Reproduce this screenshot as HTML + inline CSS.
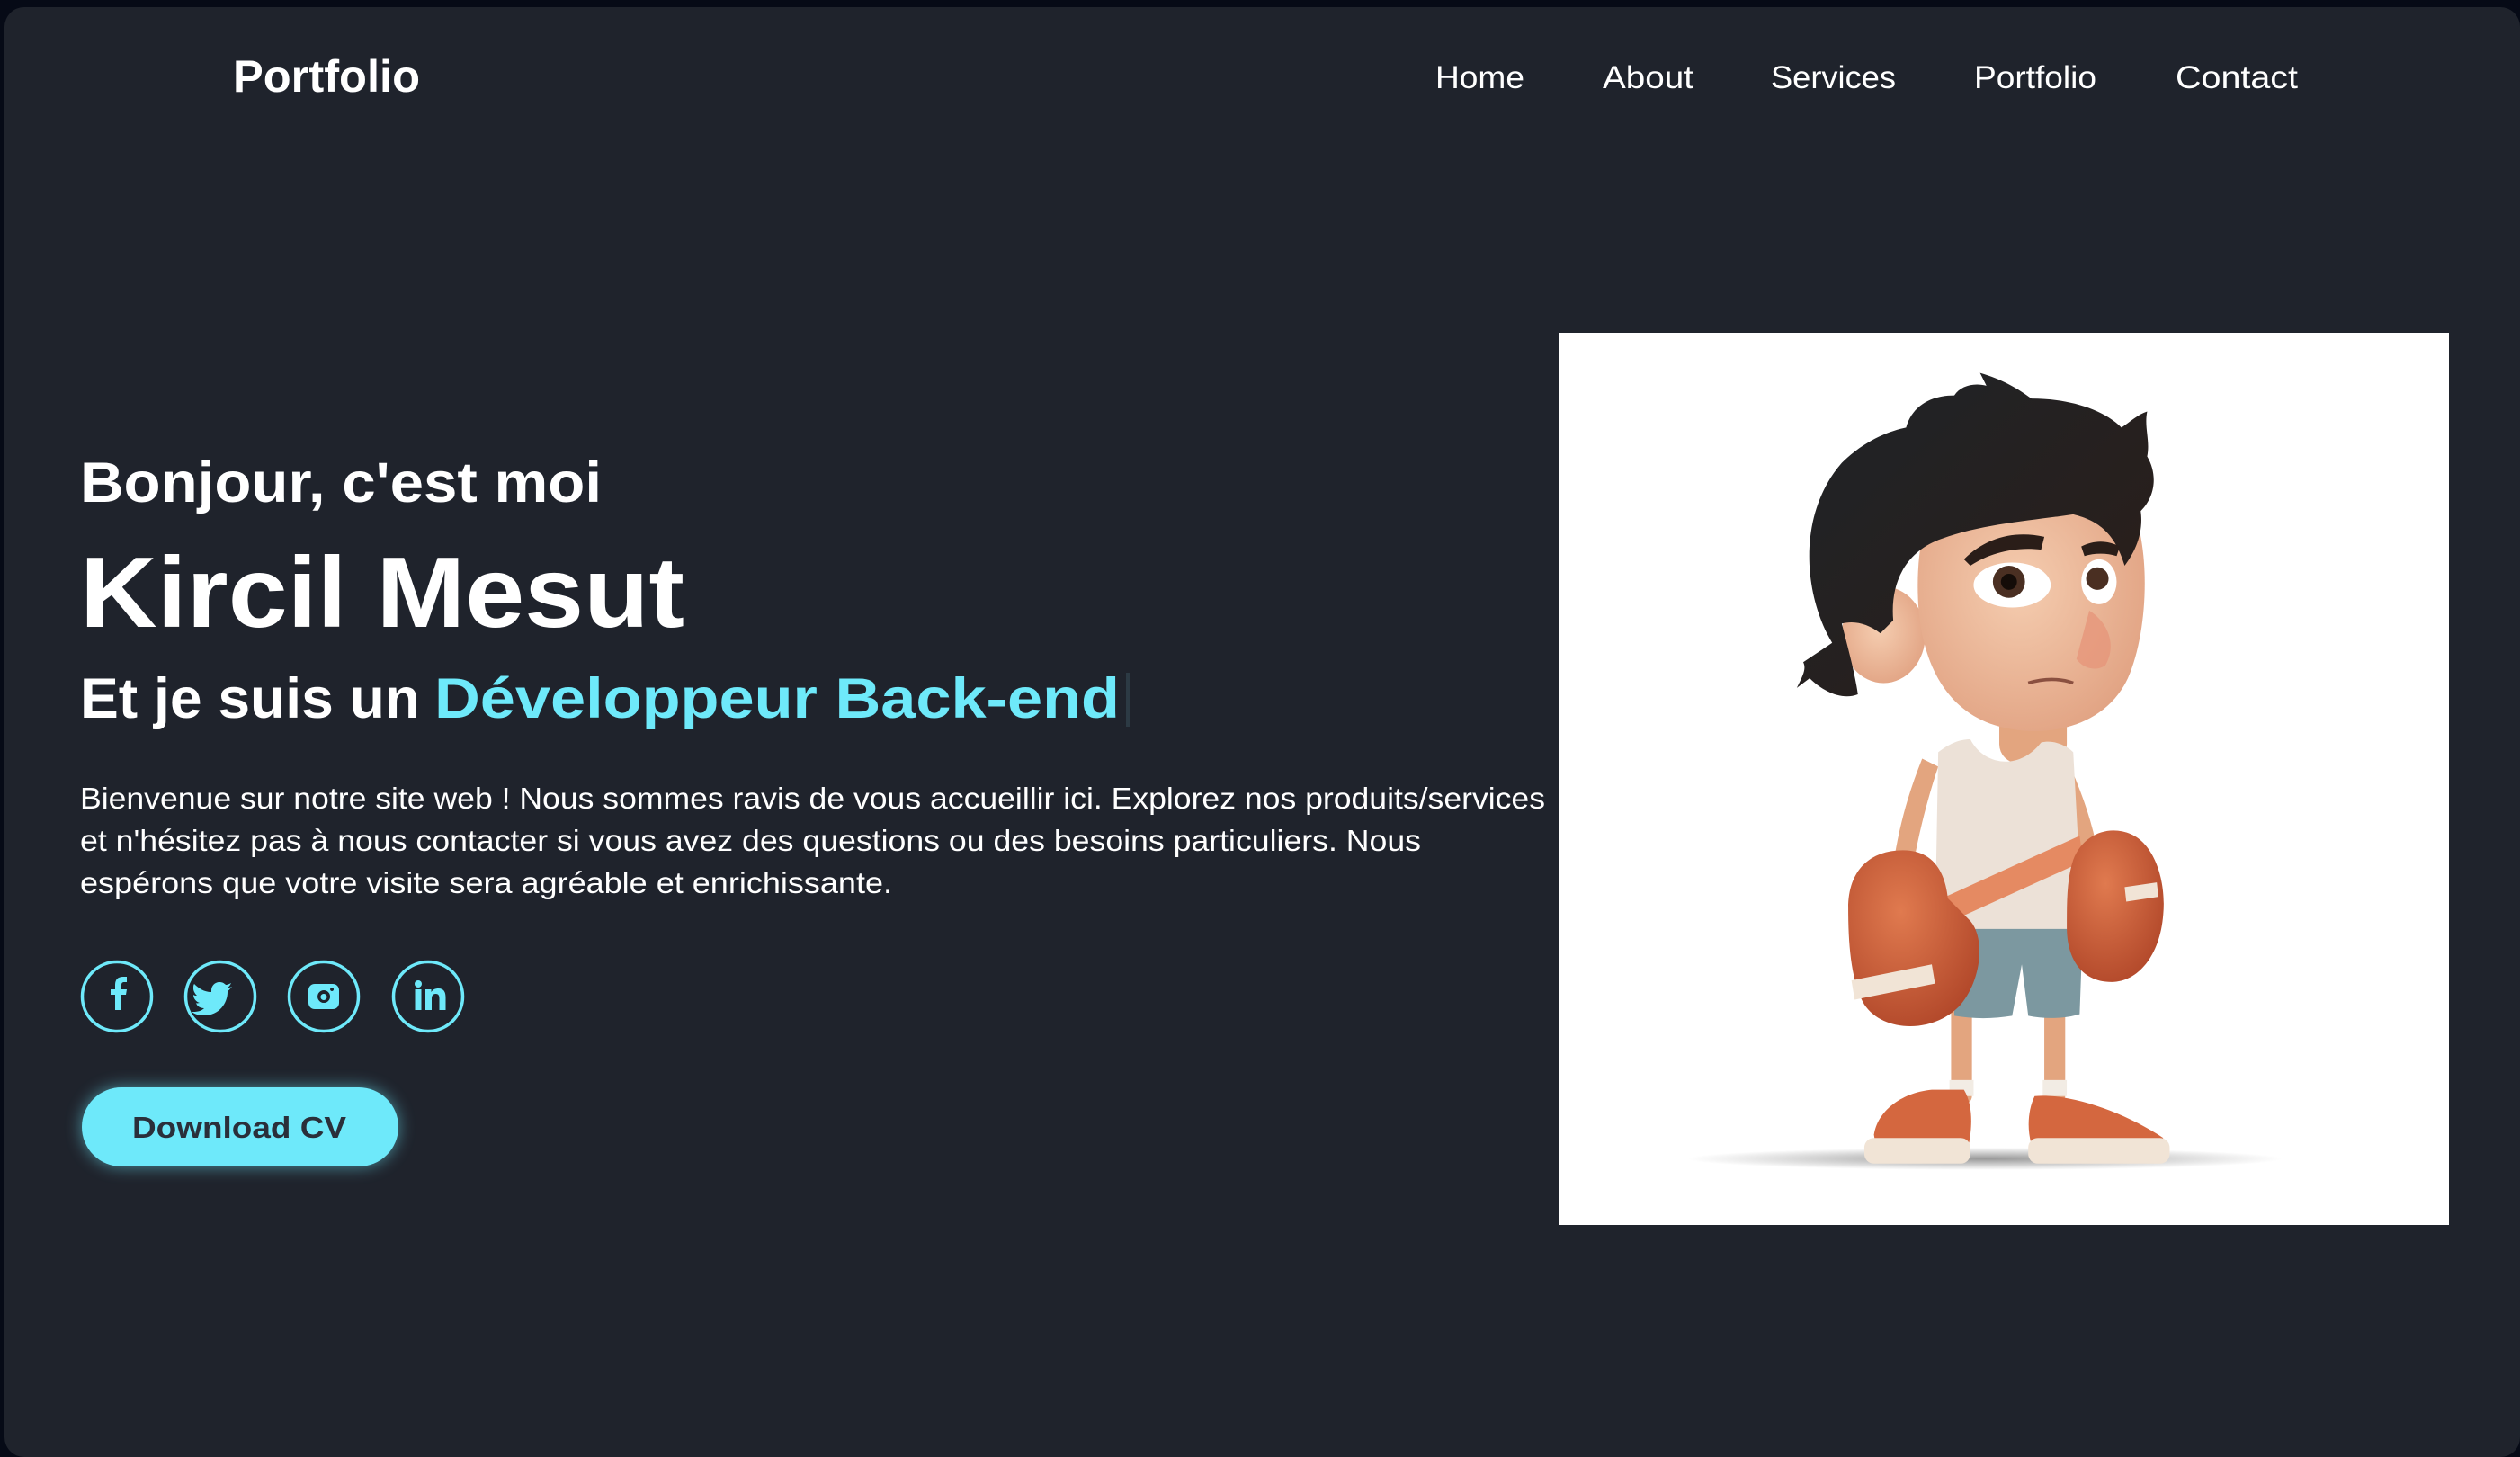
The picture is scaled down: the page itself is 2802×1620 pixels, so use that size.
<!DOCTYPE html>
<html><head><meta charset="utf-8"><style>
html,body{margin:0;padding:0;background:#060a16;width:2802px;height:1620px;overflow:hidden}
svg{display:block}
</style></head><body>
<svg width="2802" height="1620" viewBox="0 0 2802 1620" xmlns="http://www.w3.org/2000/svg" font-family="Liberation Sans, sans-serif">
<defs>
<filter id="glow" x="-30%" y="-60%" width="160%" height="220%"><feGaussianBlur stdDeviation="9"/></filter>
<radialGradient id="shadow" cx="0.5" cy="0.5" r="0.5"><stop offset="0" stop-color="#000" stop-opacity="0.4"/><stop offset="1" stop-color="#000" stop-opacity="0"/></radialGradient>
<radialGradient id="skin" cx="0.45" cy="0.45" r="0.65"><stop offset="0" stop-color="#f5cdb0"/><stop offset="1" stop-color="#e0a080"/></radialGradient>
<radialGradient id="glove" cx="0.4" cy="0.35" r="0.7"><stop offset="0" stop-color="#e07a4f"/><stop offset="1" stop-color="#b2482a"/></radialGradient>
<linearGradient id="hair" x1="0" y1="0" x2="1" y2="1"><stop offset="0" stop-color="#1f2428"/><stop offset="1" stop-color="#2b1d18"/></linearGradient>
</defs>
<rect x="5" y="8" width="2797" height="1612" rx="22" fill="#1f232c"/>

<text x="259" y="102" font-size="50" font-weight="bold" fill="#fff" textLength="208" lengthAdjust="spacingAndGlyphs">Portfolio</text>
<g font-size="35" fill="#fff">
<text x="1596" y="98" textLength="99" lengthAdjust="spacingAndGlyphs">Home</text>
<text x="1782" y="98" textLength="101" lengthAdjust="spacingAndGlyphs">About</text>
<text x="1969" y="98" textLength="139" lengthAdjust="spacingAndGlyphs">Services</text>
<text x="2195" y="98" textLength="136" lengthAdjust="spacingAndGlyphs">Portfolio</text>
<text x="2419" y="98" textLength="136" lengthAdjust="spacingAndGlyphs">Contact</text>
</g>

<text x="89" y="558" font-size="63" font-weight="bold" fill="#fff" textLength="580" lengthAdjust="spacingAndGlyphs">Bonjour, c'est moi</text>
<text x="89" y="697" font-size="111" font-weight="bold" fill="#fff" textLength="672" lengthAdjust="spacingAndGlyphs">Kircil Mesut</text>
<text x="89" y="798" font-size="63" font-weight="bold" fill="#fff" textLength="378" lengthAdjust="spacingAndGlyphs">Et je suis un</text>
<text x="483" y="798" font-size="63" font-weight="bold" fill="#6ee9fa" textLength="762" lengthAdjust="spacingAndGlyphs">Développeur Back-end</text>
<rect x="1252" y="748" width="5" height="60" fill="#2c3a44"/>

<g font-size="33" fill="#fff">
<text x="89" y="899" textLength="1629" lengthAdjust="spacingAndGlyphs">Bienvenue sur notre site web ! Nous sommes ravis de vous accueillir ici. Explorez nos produits/services</text>
<text x="89" y="946" textLength="1491" lengthAdjust="spacingAndGlyphs">et n'hésitez pas à nous contacter si vous avez des questions ou des besoins particuliers. Nous</text>
<text x="89" y="993" textLength="903" lengthAdjust="spacingAndGlyphs">espérons que votre visite sera agréable et enrichissante.</text>
</g>

<g fill="none" stroke="#6ee9fa" stroke-width="3.5">
<circle cx="130" cy="1108" r="38.5"/><circle cx="245" cy="1108" r="38.5"/><circle cx="360" cy="1108" r="38.5"/><circle cx="476" cy="1108" r="38.5"/>
</g>
<g fill="#6ee9fa">
<path d="M128 1123v-17h-5v-6h5v-5c0-6 3-9 9-9h4v6h-3c-2 0-3 1-3 3v5h6l-1 6h-5v17z"/>
<path d="M258 1097c-2 1-3 1-5 1 2-1 3-3 4-5-2 1-4 2-6 2-2-2-4-3-7-3-5 0-9 4-9 9v2c-8 0-14-4-19-9-1 1-1 3-1 5 0 3 2 6 4 8-1 0-3 0-4-1 0 4 3 8 7 9-1 0-3 1-4 0 1 4 5 6 9 6-3 3-7 4-12 4h-2c4 3 9 4 14 4 17 0 26-14 26-26v-1c2-1 3-3 5-5z"/>
<path d="M350 1094h20c4 0 7 3 7 7v14c0 4-3 7-7 7h-20c-4 0-7-3-7-7v-14c0-4 3-7 7-7zm10 7a7 7 0 1 0 0.1 0zm0 4a3.5 3.5 0 1 1-0.1 0zm9-7a2 2 0 1 0 0.1 0z" fill-rule="evenodd"/>
<circle cx="465" cy="1094" r="4"/><rect x="461.5" y="1100" width="7" height="23"/>
<path d="M473 1100h6.5v3c2-3 4.5-4 8-4 6 0 8 4 8 10v14h-7v-13c0-3-1-5-4-5s-4.5 2-4.5 5v13h-7z"/>
</g>

<rect x="91" y="1209" width="352" height="88" rx="44" fill="#6ee9fa" opacity="0.55" filter="url(#glow)"/>
<rect x="91" y="1209" width="352" height="88" rx="44" fill="#6ee9fa"/>
<text x="147" y="1265" font-size="33" font-weight="bold" fill="#2a2f3a" textLength="238" lengthAdjust="spacingAndGlyphs">Download CV</text>

<rect x="1733" y="370" width="990" height="992" fill="#fff"/>
<g transform="scale(1.787)">
<ellipse cx="1235" cy="721" rx="185" ry="7" fill="url(#shadow)"/>
<!-- legs -->
<rect x="1214" y="625" width="13" height="62" rx="5" fill="#e3a57f"/>
<rect x="1272" y="625" width="13" height="62" rx="5" fill="#e3a57f"/>
<rect x="1213" y="672" width="15" height="10" fill="#f2ece4"/>
<rect x="1271" y="672" width="15" height="10" fill="#f2ece4"/>
<!-- shoes -->
<path d="M1166 706c2-14 16-26 36-28h20c6 10 5 24 3 34h-58z" fill="#d4673f"/>
<rect x="1160" y="708" width="66" height="16" rx="6" fill="#f1e4d6"/>
<path d="M1266 682c22-2 56 10 80 26l-2 4h-80c-3-10-2-22 2-30z" fill="#d4673f"/>
<rect x="1262" y="708" width="88" height="16" rx="6" fill="#f1e4d6"/>
<!-- shorts -->
<path d="M1216 576h80l-2 55c-10 3-22 3-32 1l-4-32-6 32c-12 2-24 2-36 0z" fill="#7c98a0"/>
<!-- arms -->
<path d="M1196 472c-8 20-14 40-18 66l12 3c4-24 10-46 16-64z" fill="#e3a57f"/>
<path d="M1286 472c8 18 14 34 18 52l-10 4c-4-18-8-34-14-50z" fill="#e3a57f"/>
<!-- neck -->
<rect x="1244" y="430" width="42" height="45" rx="12" fill="#e3a57f"/>
<!-- tank top -->
<path d="M1206 468c8-6 14-8 20-8 8 16 30 20 44 2 8-2 16 2 20 6l6 110h-92z" fill="#ece1d7"/>
<path d="M1206 560l88-40 2 16-88 40z" fill="#e58a62"/>
<!-- gloves -->
<path d="M1150 565c0-24 14-36 34-36 18 0 26 12 28 30l14 14c10 12 6 38-6 52-16 18-48 18-60 0-8-14-10-36-10-60z" fill="url(#glove)"/>
<path d="M1152 610l50-10 2 12-50 10z" fill="#f1e4d6"/>
<path d="M1290 535c6-16 22-22 36-16 14 6 22 28 20 50-2 26-16 42-32 42-20 0-28-16-28-34 0-16 0-30 4-42z" fill="url(#glove)"/>
<path d="M1322 552l20-3 1 9-20 3z" fill="#f1e4d6"/>
<!-- ear -->
<ellipse cx="1172" cy="395" rx="26" ry="30" fill="url(#skin)"/>
<!-- face -->
<path d="M1200 320c30-30 100-40 124-10 14 24 14 80 0 112-14 30-50 38-80 30-30-8-46-34-50-70-2-24 0-46 6-62z" fill="url(#skin)"/>
<!-- hair -->
<path d="M1140 400c-18-30-22-80 6-112 14-14 30-20 40-22 4-14 16-20 30-20 4-6 12-8 20-6l-4-8c14 4 24 10 32 16 22 0 44 6 56 18 6-4 10-8 16-10-2 10 2 18 0 28 6 10 6 24-4 34 2 14-4 26-10 34-6-20-16-28-32-32-26 4-58 6-84 16-20 8-30 26-28 50l-8 8c-8-6-16-8-24-6 4 16 8 30 10 44-10 4-22-2-30-10l-8 6c4-8 6-12 4-16z" fill="url(#hair)"/>
<!-- brows, eyes -->
<path d="M1222 348c14-14 32-18 50-14l-2 8c-16-2-32 2-44 10z" fill="#2a1d18"/>
<path d="M1295 340c8-4 16-4 24 0l-2 6c-6-2-14-2-20 0z" fill="#2a1d18"/>
<ellipse cx="1252" cy="364" rx="24" ry="14" fill="#fff"/>
<circle cx="1250" cy="362" r="10" fill="#4a2f22"/><circle cx="1250" cy="362" r="5" fill="#140c08"/>
<ellipse cx="1306" cy="362" rx="11" ry="14" fill="#fff"/>
<circle cx="1305" cy="360" r="7" fill="#4a2f22"/>
<path d="M1300 380c10 6 18 20 10 34-6 4-14 2-18-4z" fill="#e6967a" opacity="0.8"/>
<path d="M1262 425c10-3 20-3 28 0" stroke="#8a5040" stroke-width="2" fill="none"/>
</g>
</svg>
</body></html>
